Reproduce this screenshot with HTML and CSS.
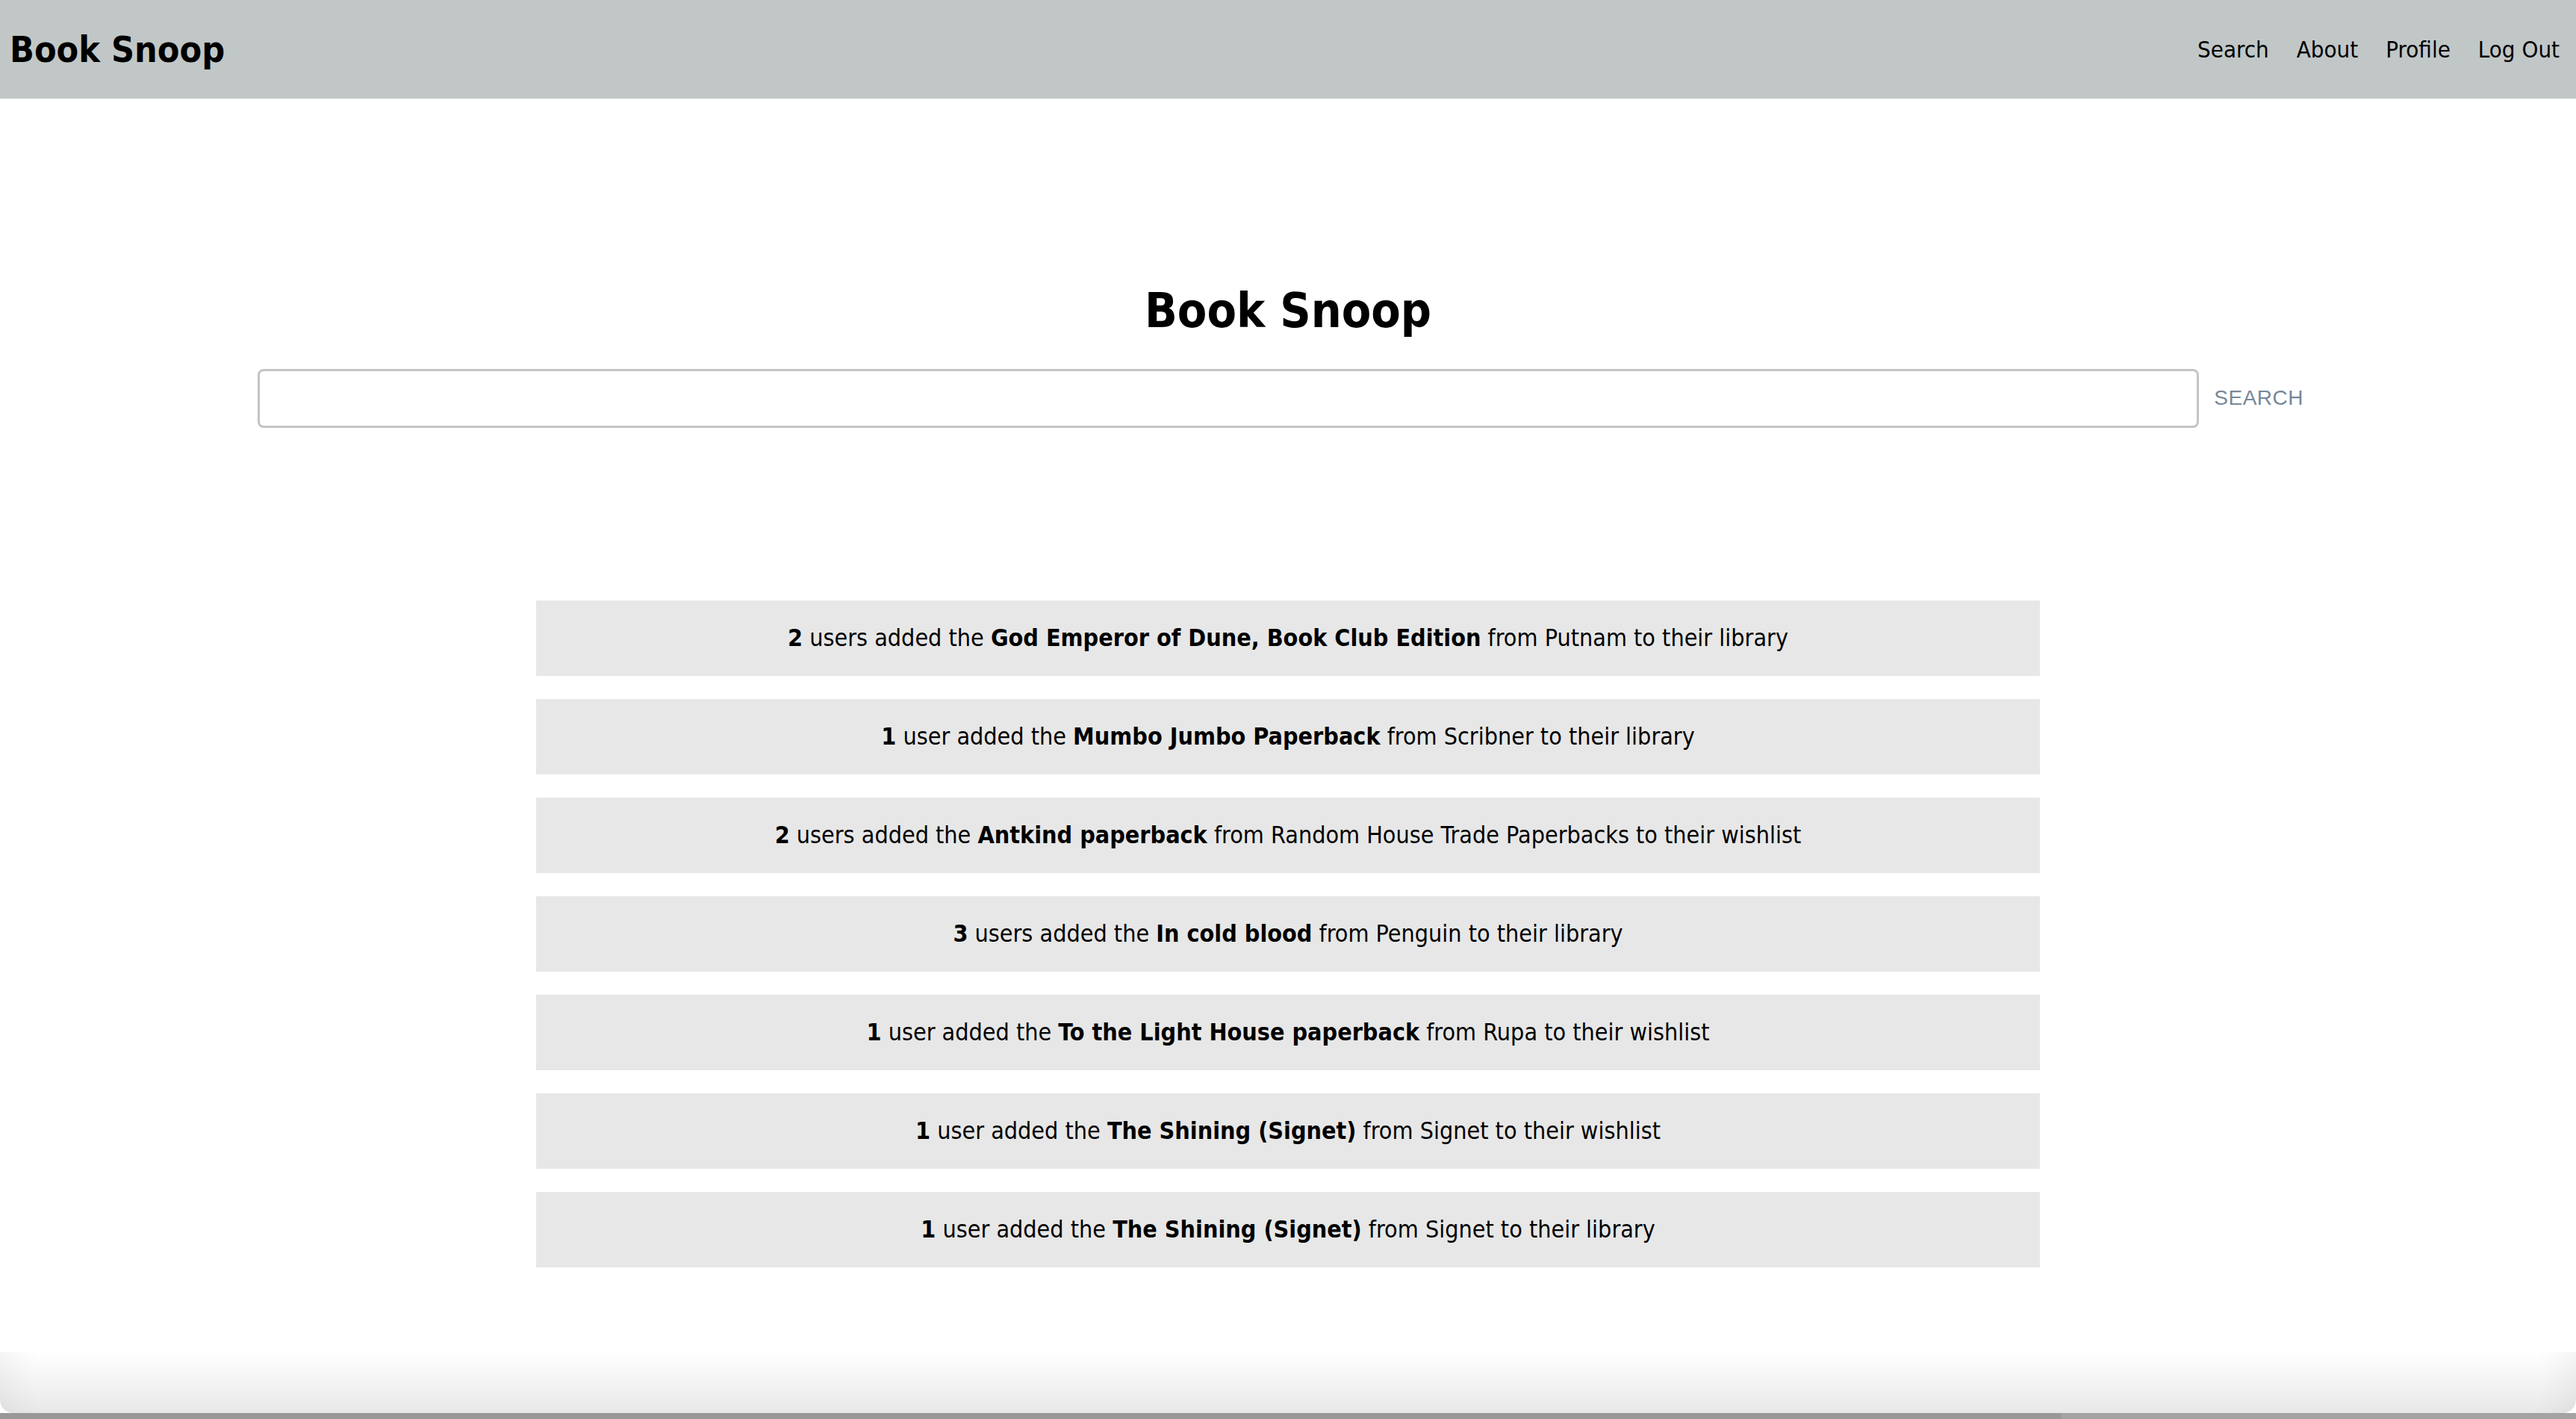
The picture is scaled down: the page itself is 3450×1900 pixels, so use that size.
FILE: index.html
```html
<!DOCTYPE html>
<html lang="en">
<head>
<meta charset="utf-8">
<title>Book Snoop</title>
<link rel="stylesheet" href="styles.css">
</head>
<body>
<header class="topbar">
  <a class="brand" href="#">Book Snoop</a>
  <nav class="nav">
    <a href="#">Search</a>
    <a href="#">About</a>
    <a href="#">Profile</a>
    <a href="#">Log Out</a>
  </nav>
</header>
<main class="page">
  <section class="hero">
    <h1 class="title">Book Snoop</h1>
    <form class="search-form">
      <input class="search-input" type="text">
      <button class="search-btn" type="button">Search</button>
    </form>
  </section>
  <ul class="feed">
    <li class="feed-item"><b>2</b> users added the <b>God Emperor of Dune, Book Club Edition</b> from Putnam to their library</li>
    <li class="feed-item"><b>1</b> user added the <b>Mumbo Jumbo Paperback</b> from Scribner to their library</li>
    <li class="feed-item"><b>2</b> users added the <b>Antkind paperback</b> from Random House Trade Paperbacks to their wishlist</li>
    <li class="feed-item"><b>3</b> users added the <b>In cold blood</b> from Penguin to their library</li>
    <li class="feed-item"><b>1</b> user added the <b>To the Light House paperback</b> from Rupa to their wishlist</li>
    <li class="feed-item"><b>1</b> user added the <b>The Shining (Signet)</b> from Signet to their wishlist</li>
    <li class="feed-item"><b>1</b> user added the <b>The Shining (Signet)</b> from Signet to their library</li>
  </ul>
</main>
<div class="window-edge"><div class="window-shade"></div><div class="desk"></div></div>
</body>
</html>
```
FILE: styles.css
```css
html, body {
  margin: 0;
  padding: 0;
  background: #ffffff;
}
body {
  font-family: "DejaVu Sans Condensed", "DejaVu Sans", Verdana, sans-serif;
  font-stretch: condensed;
  color: #000;
  height: 1900px;
  overflow: hidden;
}
a { color: inherit; text-decoration: none; }

.topbar {
  height: 132px;
  background: #c1c7c7;
  display: flex;
  align-items: center;
  justify-content: space-between;
  padding: 0 22px 0 13px;
  box-sizing: border-box;
}
.brand {
  font-size: 48px;
  font-weight: bold;
}
.nav {
  display: flex;
  gap: 37px;
  font-size: 31px;
}

.page {
  padding: 0 10%;
}
.hero {
  padding-top: 246px;
  display: flex;
  flex-direction: column;
  align-items: stretch;
}
.title {
  margin: 0 0 39px;
  text-align: center;
  font-size: 64px;
  font-weight: bold;
  line-height: 1.2;
}
.search-form {
  display: flex;
  align-items: center;
  margin: 0;
}
.search-input {
  flex: 1;
  height: 79px;
  box-sizing: border-box;
  border: 3px solid #c4c4c4;
  border-radius: 8px;
  background: #fff;
  font-size: 32px;
  outline: none;
}
.search-btn {
  background: none;
  border: none;
  padding: 0 20px;
  font-family: "Liberation Sans", Arial, sans-serif;
  font-size: 28px;
  text-transform: uppercase;
  color: #778899;
  letter-spacing: 0.5px;
}

.feed {
  list-style: none;
  margin: 231px auto 0;
  padding: 0;
  width: 73%;
  display: flex;
  flex-direction: column;
  gap: 31px;
}
.feed-item {
  background: #e7e7e7;
  height: 101px;
  display: flex;
  align-items: center;
  justify-content: center;
  font-size: 32px;
  white-space: pre-wrap;
}
.feed-item b { font-weight: bold; }

.window-edge {
  position: fixed;
  left: 0;
  right: 0;
  bottom: 0;
  height: 90px;
  display: flex;
  flex-direction: column;
}
.window-shade {
  flex: 1;
  background: linear-gradient(to bottom, rgba(0,0,0,0), rgba(0,0,0,0.09));
  border-radius: 0 0 18px 18px;
  box-shadow: inset 60px 0 50px -40px rgba(0,0,0,0.05), inset -60px 0 50px -40px rgba(0,0,0,0.05);
}
.desk {
  height: 8px;
  background: linear-gradient(to right, #989898 0, #989898 80%, #a3a3a3 80%, #a3a3a3 100%);
}
```
